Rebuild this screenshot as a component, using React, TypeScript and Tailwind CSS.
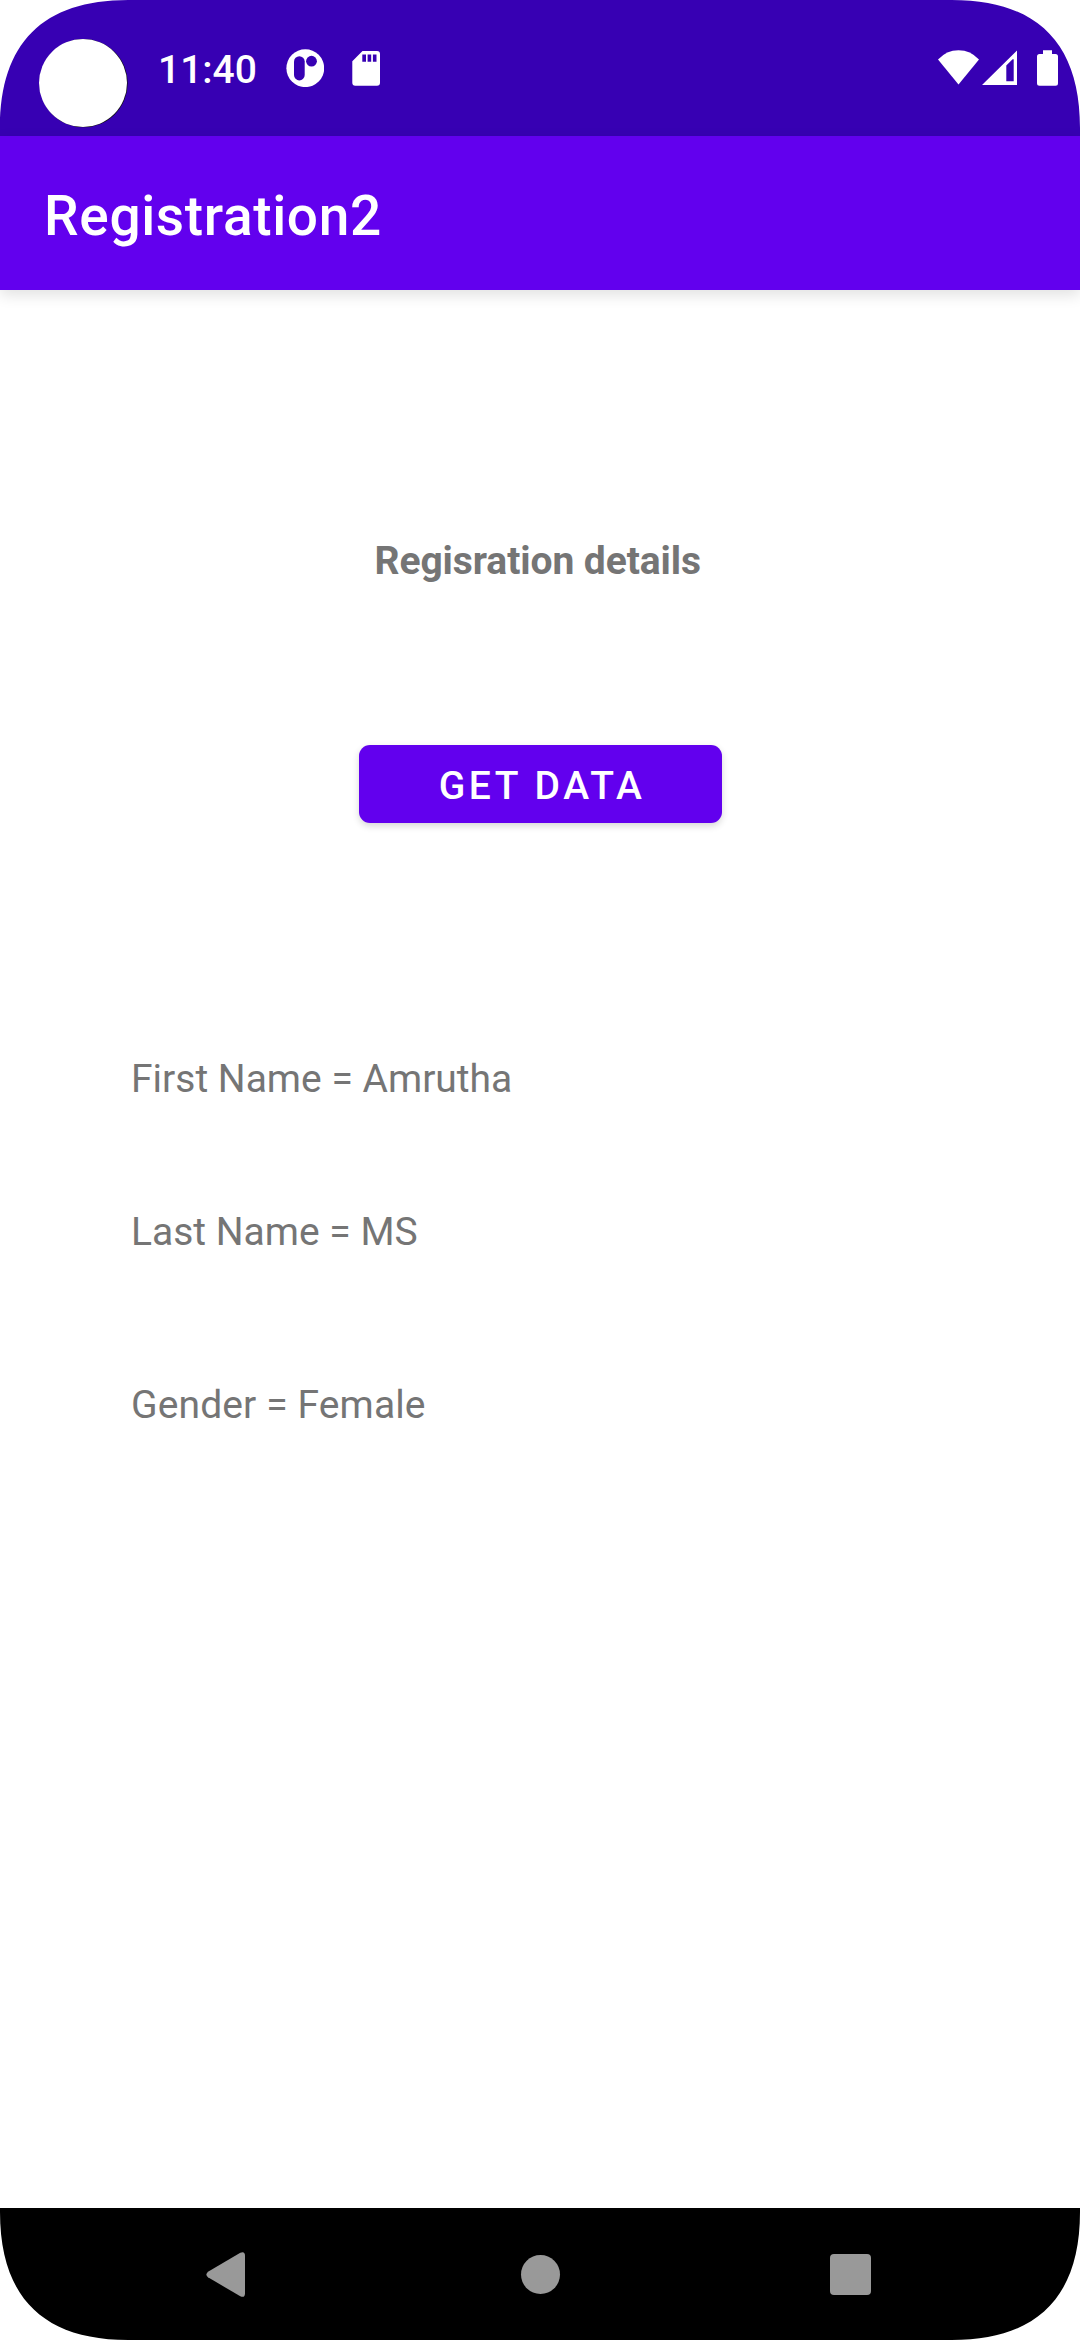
const CORNER = "M0 0H128C43 0 0 43 0 128Z";

function Corner({ className }: { className: string }) {
  return (
    <svg viewBox="0 0 128 128" className={`absolute size-[128px] ${className}`} aria-hidden="true">
      <path d={CORNER} fill="#fff" />
    </svg>
  );
}

function StatusBar() {
  return (
    <div className="flex h-[136px] shrink-0 items-start bg-[#3700b3] pl-[39px] pr-[22px] text-white">
      <svg viewBox="0 0 90 90" className="mt-[39px] h-[90px] w-[90px] shrink-0">
        <circle cx="44.6" cy="44.2" r="44.1" fill="#111" />
        <circle cx="44" cy="44" r="44" fill="#fff" />
      </svg>
      <span className="ml-[29px] mt-[44px] w-[128px] text-[39px] font-medium leading-[52px]">11:40</span>
      <svg viewBox="0 0 38 38" className="mt-[49px] h-[38px] w-[38px]">
        <circle cx="19.3" cy="19.2" r="18.9" fill="#fff" />
        <rect x="8" y="7.2" width="10.7" height="24.2" rx="5.35" fill="#3700b3" />
        <circle cx="25.5" cy="12.2" r="5.4" fill="#3700b3" />
      </svg>
      <svg viewBox="0 0 28 35" className="ml-[28px] mt-[51px] h-[35px] w-[28px]">
        <path
          fill="#fff"
          fillRule="evenodd"
          d="M10.5 0H25a3 3 0 0 1 3 3V31.8a3 3 0 0 1-3 3H3.3a3 3 0 0 1-3-3V10.2ZM10.3 3.5V10.8H14V3.5ZM15.6 3.5V10.8H19.2V3.5ZM20.9 3.5V10.8H24.5V3.5Z"
        />
      </svg>
      <div className="grow" />
      <svg viewBox="0 0 41 35" className="mt-[50px] h-[35px] w-[41px]">
        <path d="M0 9.6Q8.5 0.3 20.5 0.3T41 9.6L20.5 34.5Z" fill="#fff" />
      </svg>
      <svg viewBox="0 0 35 35" className="ml-[3px] mt-[50px] h-[35px] w-[35px]">
        <path
          d="M0 35L35 0.4V35ZM24.3 15.5V31.3H31.7V9.2H30.6Z"
          fill="#fff"
          fillRule="evenodd"
        />
      </svg>
      <svg viewBox="0 0 21 36" className="ml-[20px] mt-[50px] h-[36px] w-[21px]">
        <path
          d="M6 0.3H15V4H18.5A2.5 2.5 0 0 1 21 6.5V33.2A2.5 2.5 0 0 1 18.5 35.7H2.5A2.5 2.5 0 0 1 0 33.2V6.5A2.5 2.5 0 0 1 2.5 4H6Z"
          fill="#fff"
        />
      </svg>
    </div>
  );
}

function NavigationBar() {
  return (
    <div className="flex h-[132px] shrink-0 items-start bg-black pl-[206px] text-[#999]">
      <svg viewBox="0 0 39 46" className="mt-[44px] h-[46px] w-[39px]">
        <path
          d="M34.3 0.7Q39 -1.2 39 3.8V41.2Q39 46.2 34.3 44.3L2 25.3Q-1.2 22.5 2 19.7Z"
          fill="currentColor"
        />
      </svg>
      <div className="ml-[276px] mt-[47px] size-[39px] rounded-full bg-[#999]" />
      <div className="ml-[270px] mt-[46px] size-[41px] rounded-[4px] bg-[#999]" />
    </div>
  );
}

export default function App() {
  return (
    <div className="relative flex h-[2340px] w-[1080px] flex-col overflow-hidden bg-white font-[Roboto,sans-serif]">
      <StatusBar />
      <header className="relative h-[154px] shrink-0 bg-[#6200ee] pl-[44px] pt-[48px] shadow-[0_5px_14px_rgba(0,0,0,0.12)]">
        <h1 className="text-[55px] font-medium leading-[64px] tracking-[0.65px] text-white">Registration2</h1>
      </header>
      <main className="flex grow flex-col items-start pt-[245px] text-[39px] leading-[52px] text-[#757575]">
        <h2 className="ml-[374.5px] font-bold tracking-[-0.08px]">Regisration details</h2>
        <button className="ml-[359px] mt-[158px] flex h-[78px] w-[363px] items-start justify-center rounded-[11px] bg-[#6200ee] pl-[3px] pt-[15px] font-medium tracking-[3.6px] text-white shadow-[0_3px_7px_rgba(0,0,0,0.16)]">
          GET DATA
        </button>
        <p className="ml-[131px] mt-[230px]">First Name = Amrutha</p>
        <p className="ml-[131px] mt-[101px]">Last Name = MS</p>
        <p className="ml-[131px] mt-[121px] tracking-[0.12px]">Gender = Female</p>
      </main>
      <NavigationBar />
      <Corner className="left-0 top-0" />
      <Corner className="right-0 top-0 -scale-x-100" />
      <Corner className="bottom-0 left-0 -scale-y-100" />
      <Corner className="bottom-0 right-0 -scale-100" />
    </div>
  );
}
